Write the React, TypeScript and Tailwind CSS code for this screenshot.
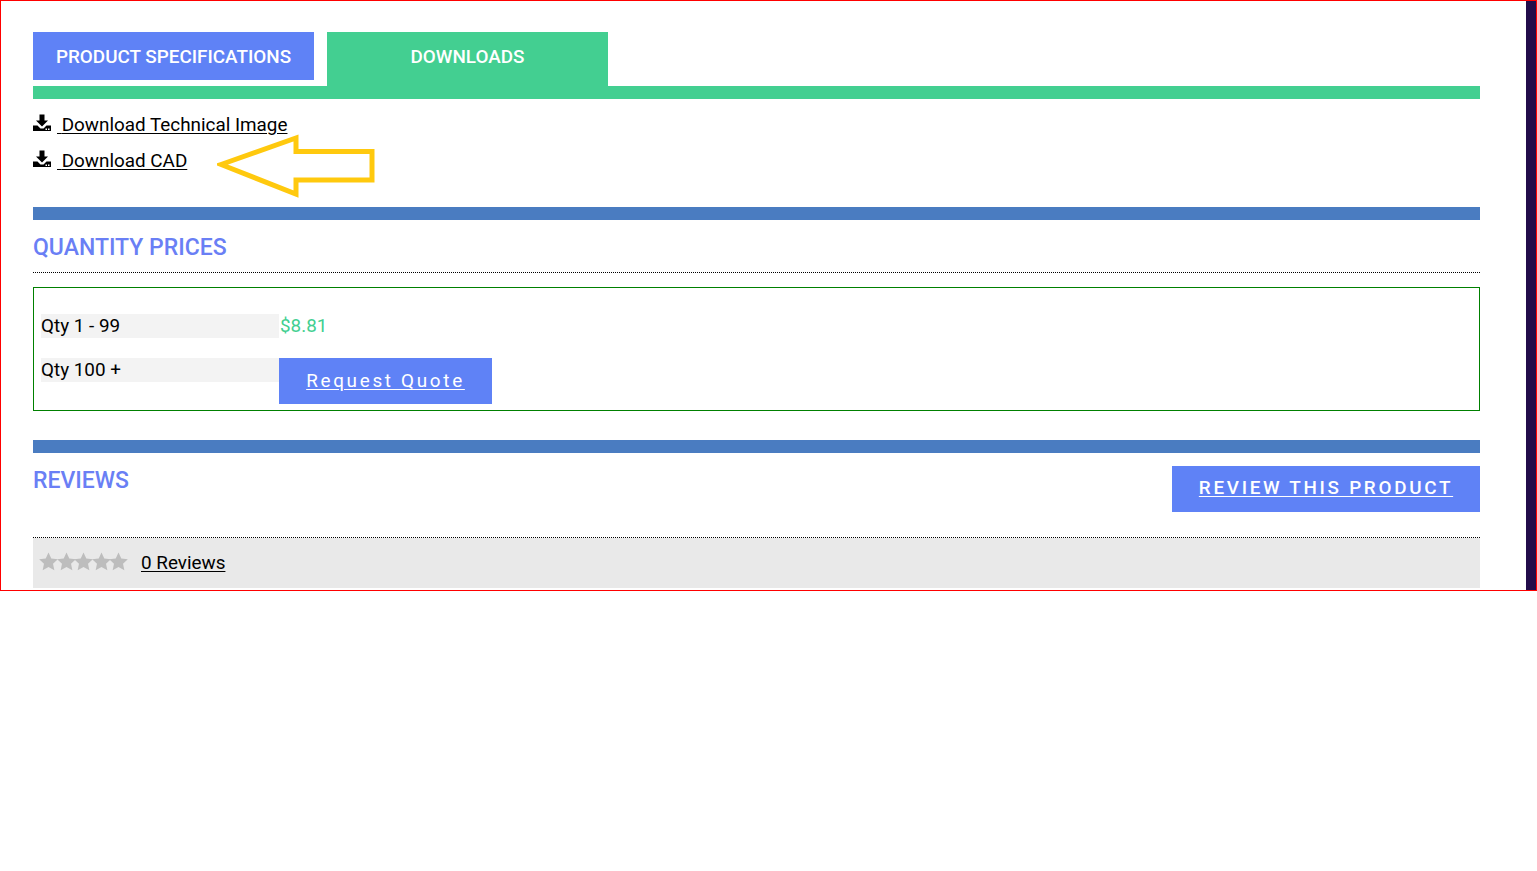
const font = { fontFamily: "Roboto, sans-serif" };

function DownloadIcon() {
  return (
    <svg width="18" height="18" viewBox="0 0 18 18" className="shrink-0">
      <path d="M6.5 0.5h5v6h3.5L9 12.5 3 6.5h3.5z" fill="#000" />
      <path d="M0 11.5h4.5L7.5 14.5h3l3-3H18v5.5H0z" fill="#000" />
      <rect x="12.5" y="14.5" width="1.5" height="1.5" fill="#fff" />
      <rect x="15" y="14.5" width="1.5" height="1.5" fill="#fff" />
    </svg>
  );
}

function DownloadLink({ label }: { label: string }) {
  return (
    <div className="flex h-[36px] items-start">
      <a href="#" className="flex text-[18.88px] leading-[24px] text-black underline underline-offset-2">
        <span className="pt-[1px]"><DownloadIcon /></span>
        <span className="whitespace-pre pl-[6px]"> {label}</span>
      </a>
    </div>
  );
}

function Star() {
  return (
    <svg width="19" height="19" viewBox="0 0 24 24" className="-mr-[1.5px] shrink-0">
      <path d="M12 0.5l3.5 7.6 8.3 1-6.1 5.7 1.7 8.2L12 18.9 4.6 23l1.7-8.2L0.2 9.1l8.3-1z" fill="#bdbdbd" />
    </svg>
  );
}

export default function App() {
  return (
    <div style={font} className="relative box-border flex h-[591px] w-[1537px] border border-[#ff0000] bg-white">
      <div className="w-[1447px] ml-[32px] pt-[31px]">
        <div className="flex items-start gap-[13px]">
          <div className="flex h-[48px] w-[281px] items-center justify-center bg-[#5f82f6] pt-[2px] text-[18.88px] font-medium uppercase text-white">
            Product Specifications
          </div>
          <div className="flex h-[54px] w-[281px] items-center justify-center bg-[#43cf91] pb-[4px] pt-[1px] text-[18.88px] font-medium uppercase text-white">
            Downloads
          </div>
        </div>
        <div className="h-[13px] bg-[#43cf91]" />

        <div className="pt-[14px]">
          <DownloadLink label="Download Technical Image" />
          <DownloadLink label="Download CAD" />
        </div>

        <div className="mt-[22px] h-[13px] bg-[#4a7cc1]" />
        <div className="h-[53px] border-b border-dotted border-black pt-[13px] text-[23px] font-medium leading-[30px] text-[#6a7ff5]">
          QUANTITY PRICES
        </div>

        <div className="mt-[14px] box-border h-[124px] border border-[#008000] pl-[7px] pt-[26px]">
          <div className="flex items-start">
            <div className="h-[24px] w-[238px] bg-[#f3f3f3] text-[18.88px] leading-[24px] text-black">Qty 1 - 99</div>
            <div className="pl-[1px] text-[18.88px] leading-[24px] text-[#43cf91]">$8.81</div>
          </div>
          <div className="mt-[20px] flex items-start">
            <div className="h-[24px] w-[238px] bg-[#f3f3f3] text-[18.88px] leading-[24px] text-black">Qty 100 +</div>
            <a href="#" className="flex h-[46px] w-[213px] items-center justify-center bg-[#5f82f6] text-[18.88px] tracking-[2.7px] text-white underline underline-offset-2">
              Request Quote
            </a>
          </div>
        </div>

        <div className="mt-[29px] h-[13px] bg-[#4a7cc1]" />
        <div className="flex h-[85px] items-start justify-between border-b border-dotted border-black">
          <div className="pt-[13px] text-[23px] font-medium leading-[30px] text-[#6a7ff5]">REVIEWS</div>
          <a href="#" className="mt-[13px] flex h-[46px] w-[308px] items-center justify-center bg-[#5f82f6] pb-[2px] text-[18.88px] font-medium uppercase tracking-[2.7px] text-white underline underline-offset-2">
            Review this product
          </a>
        </div>
        <div className="flex h-[50px] items-center bg-[#e9e9e9] pl-[6px]">
          <div className="mb-[3px] flex w-[102px]">
            <Star /><Star /><Star /><Star /><Star />
          </div>
          <a href="#" className="text-[18.88px] leading-[24px] text-black underline underline-offset-2">0 Reviews</a>
        </div>
      </div>
      <div className="absolute bottom-0 right-0 top-0 w-[10px] bg-[#220c4a]" />
      <svg className="absolute left-[216px] top-[131px]" width="160" height="66" viewBox="0 0 160 66" fill="none">
        <path d="M4 32.5L79 6v13.5h76v28.5H79v14z" stroke="#ffc90e" strokeWidth="5" />
      </svg>
    </div>
  );
}
